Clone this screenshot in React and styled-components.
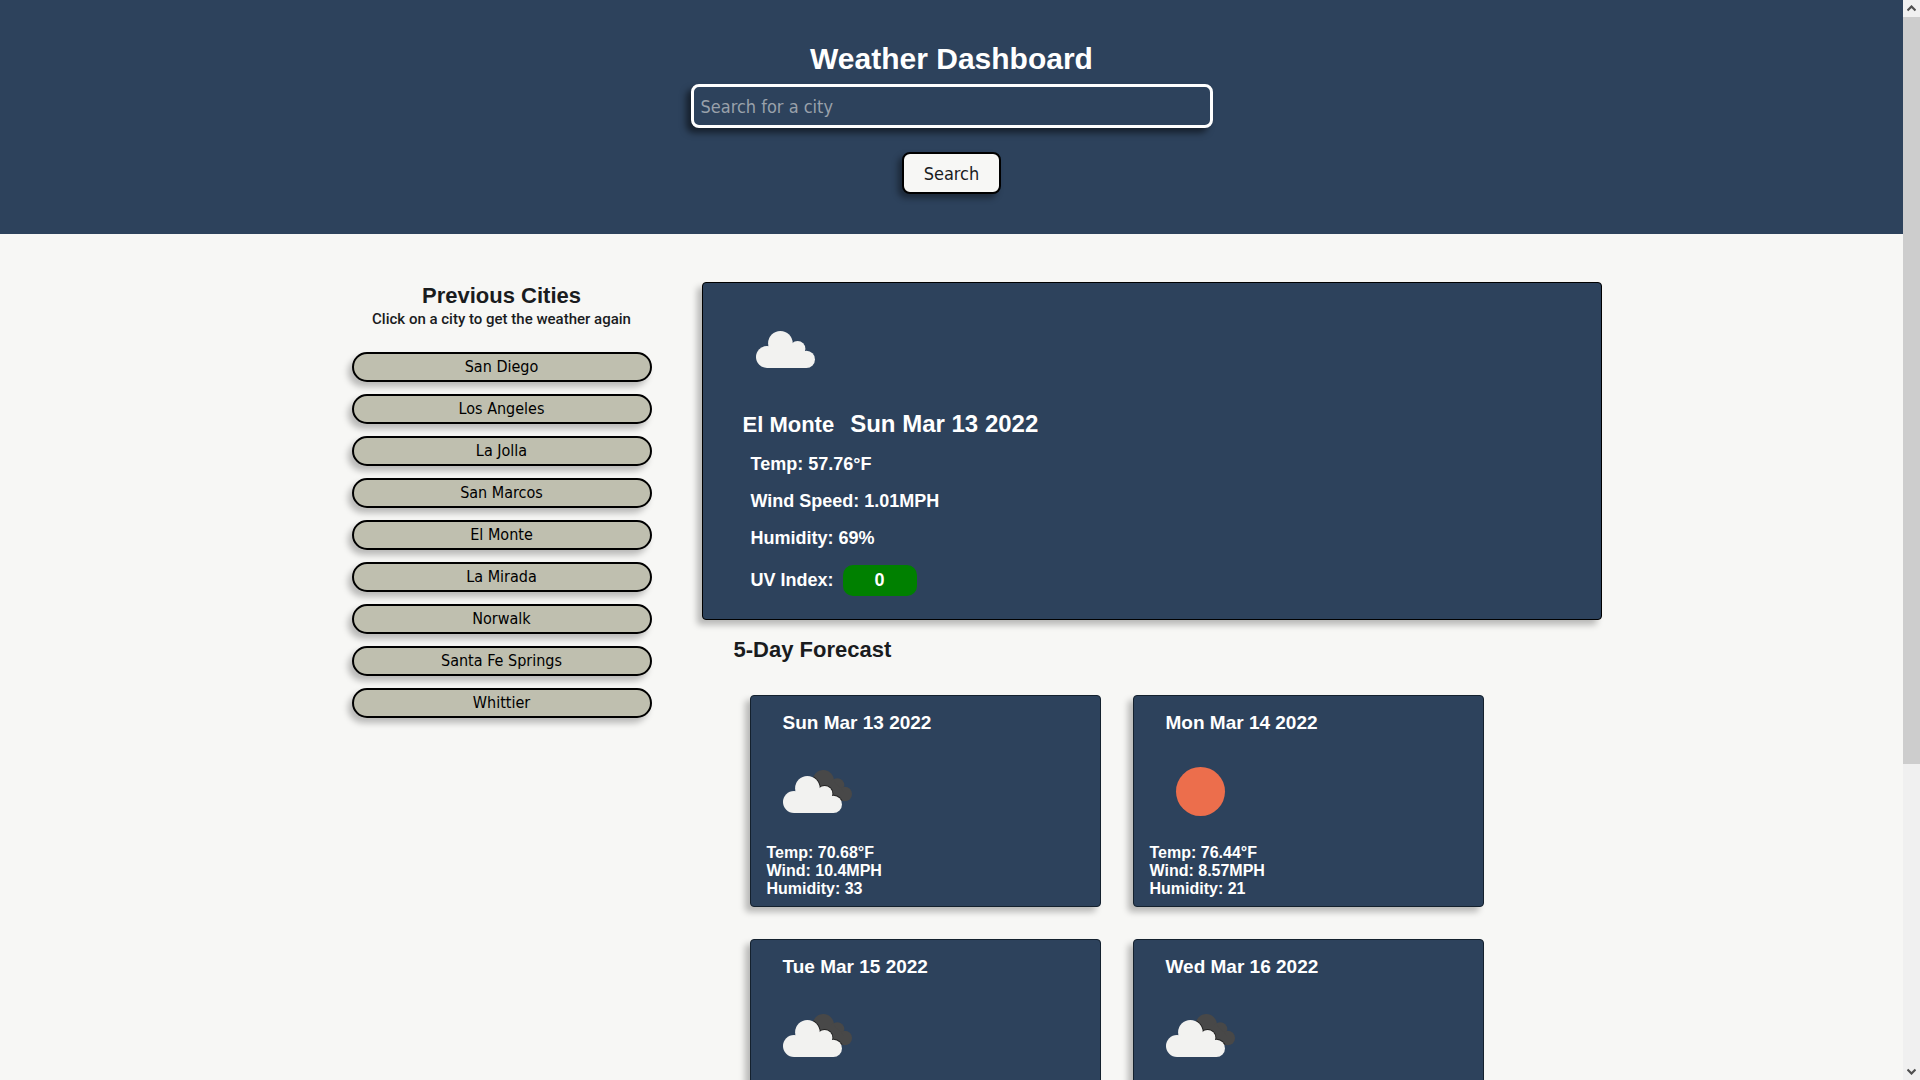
import React, { useId } from "react";
import styled, { createGlobalStyle } from "styled-components";

const navy = "#2d425c";
const paper = "#f7f7f5";
const ink = "#1a1c1e";
const heading = '"Liberation Sans", Arial, sans-serif';
const label = '"DejaVu Sans Condensed", Tahoma, "Noto Sans", sans-serif';

const GlobalStyle = createGlobalStyle`
  *, *::before, *::after { box-sizing: border-box; }
  body { margin: 0; background: ${paper}; color: ${ink}; font-family: ${heading}; }
  h1, h2, h3, p, ul { margin: 0; padding: 0; }
`;

const Window = styled.div`
  display: grid;
  grid-template-columns: minmax(0, 1fr) 17px;
  height: 100vh;
  overflow: hidden;
`;

const Page = styled.div`
  overflow: hidden;
  background: ${paper};
`;

const Header = styled.header`
  display: flex;
  justify-content: center;
  padding: 40px 16px;
  background: ${navy};
`;

const SearchForm = styled.form`
  display: flex;
  flex-direction: column;
  align-items: center;
  width: 100%;
  max-width: 522px;
`;

const Title = styled.h1`
  margin-bottom: 6px;
  color: #fff;
  font-size: 30px;
  line-height: 38px;
`;

const SearchInput = styled.input`
  width: 100%;
  height: 44px;
  margin-bottom: 24px;
  padding: 0 7px;
  border: 3px solid #fff;
  border-radius: 8px;
  background: ${navy};
  box-shadow: -5px 5px 6px rgba(0, 0, 0, 0.5);
  color: #fff;
  font-family: ${label};
  font-size: 18px;
  &::placeholder { color: #99a1ab; opacity: 1; }
`;

const SearchButton = styled.button`
  height: 42px;
  padding: 0 20px;
  border: 2px solid #000;
  border-radius: 8px;
  background: ${paper};
  box-shadow: -4px 4px 6px rgba(0, 0, 0, 0.4);
  color: ${ink};
  font-family: ${label};
  font-size: 18px;
`;

const Main = styled.main`
  display: grid;
  grid-template-columns: 300px minmax(0, 900px);
  justify-content: center;
  gap: 50px;
  padding: 48px 0 48px 50px;
`;

const SectionTitle = styled.h2`
  font-size: 22px;
  line-height: 28px;
`;

const Cities = styled.section`
  text-align: center;
`;

const Hint = styled.p`
  font-family: Roboto, ${heading};
  font-size: 15px;
  font-weight: 500;
  line-height: 18px;
`;

const CityList = styled.ul`
  display: flex;
  flex-direction: column;
  gap: 12px;
  margin-top: 24px;
  list-style: none;
`;

const CityItem = styled.li`
  display: flex;
`;

const CityButton = styled.button`
  flex: 1;
  height: 30px;
  padding: 0;
  border: 2px solid #000;
  border-radius: 16px;
  background: #bfbfaf;
  box-shadow: -4px 5px 6px rgba(0, 0, 0, 0.25);
  color: #000;
  font-family: ${label};
  font-size: 16px;
  line-height: 24px;
`;

const Panel = styled.article`
  border: 1px solid ${(p) => p.$edge};
  border-radius: 4px;
  background: ${navy};
  box-shadow: -5px 5px 6px rgba(0, 0, 0, 0.25);
  color: #fff;
`;

const Current = styled(Panel)`
  padding: 16px 32px 23px;
`;

const CurrentHeading = styled.h2`
  display: flex;
  align-items: baseline;
  gap: 16px;
  margin: 12px 8px 16px;
  font-size: 24px;
  line-height: 26px;
`;

const CityName = styled.span`
  font-size: 22px;
`;

const CurrentStats = styled.div`
  display: flex;
  flex-direction: column;
  gap: 16px;
  padding-left: 16px;
  font-size: 18px;
  font-weight: bold;
  line-height: 21px;
`;

const UvRow = styled.div`
  display: flex;
  align-items: center;
  gap: 9px;
`;

const UvBadge = styled.span`
  padding: 5px 32px;
  border-radius: 10px;
  background: green;
`;

const Forecast = styled.section`
  padding: 16px 32px 0;
`;

const ForecastGrid = styled.div`
  display: grid;
  grid-template-columns: repeat(2, minmax(0, 351px));
  gap: 32px;
  padding: 31px 16px 0;
`;

const DayCard = styled(Panel)`
  min-height: 212px;
  padding: 16px 16px 8px;
`;

const DayTitle = styled.h3`
  margin: 0 16px 6px;
  font-size: 19px;
  line-height: 22px;
`;

const DayStats = styled.div`
  margin-top: 4px;
  font-size: 16px;
  font-weight: bold;
  line-height: 18px;
`;

const Icon = styled.svg`
  display: block;
  width: 100px;
  height: 100px;
`;

const Scrollbar = styled.div`
  display: flex;
  flex-direction: column;
  background: #f0f0f0;
`;

const ScrollArrow = styled.button`
  display: grid;
  place-items: center;
  width: 17px;
  height: 17px;
  padding: 0;
  border: 0;
  background: #f0f0f0;
`;

const ScrollThumb = styled.div`
  flex: 5;
  background: #cdcdcd;
`;

const ScrollTrack = styled.div`
  flex: 2;
`;

function CloudShape(props) {
  return (
    <g {...props}>
      <circle cx="24.4" cy="12.3" r="12.3" />
      <circle cx="11" cy="26" r="11" />
      <circle cx="41.6" cy="17.8" r="7.8" />
      <circle cx="50.4" cy="28.4" r="8.6" />
      <path d="M11 20H49V24L50.4 37H11Z" />
      <path d="M20 14H42V30H20Z" />
    </g>
  );
}

function DarkCloudShape() {
  return (
    <>
      <circle cx="56.3" cy="40.7" r="10.7" />
      <circle cx="70.3" cy="45.2" r="7" />
      <circle cx="77.7" cy="54" r="7.3" />
      <path d="M50 44L66 40L77 52L77 61L60 58Z" />
    </>
  );
}

function BrokenClouds() {
  const clip = useId();
  return (
    <Icon viewBox="0 0 100 100" role="img" aria-label="Broken clouds">
      <clipPath id={clip}>
        <circle cx="56.3" cy="40.7" r="10.7" />
        <circle cx="70.3" cy="45.2" r="7" />
        <circle cx="77.7" cy="54" r="7.3" />
        <path d="M50 44L66 40L77 52L77 61L60 58Z" />
      </clipPath>
      <g fill="#484848">
        <DarkCloudShape />
      </g>
      <g clipPath={`url(#${clip})`}>
        <CloudShape transform="translate(16 36)" fill="#222" stroke="#222" strokeWidth="2" />
      </g>
      <CloudShape transform="translate(16 36)" fill="#f2f2f0" />
    </Icon>
  );
}

function ScatteredClouds() {
  return (
    <Icon viewBox="0 0 100 100" role="img" aria-label="Cloudy">
      <CloudShape transform="translate(21 32)" fill="#f2f2f0" />
    </Icon>
  );
}

function ClearSky() {
  return (
    <Icon viewBox="0 0 100 100" role="img" aria-label="Clear sky">
      <circle cx="50.5" cy="51.5" r="24.5" fill="#ec6e4c" />
    </Icon>
  );
}

const cities = [
  "San Diego", "Los Angeles", "La Jolla", "San Marcos", "El Monte",
  "La Mirada", "Norwalk", "Santa Fe Springs", "Whittier",
];

const days = [
  { date: "Sun Mar 13 2022", Sky: BrokenClouds, stats: ["Temp: 70.68°F", "Wind: 10.4MPH", "Humidity: 33"] },
  { date: "Mon Mar 14 2022", Sky: ClearSky, stats: ["Temp: 76.44°F", "Wind: 8.57MPH", "Humidity: 21"] },
  { date: "Tue Mar 15 2022", Sky: BrokenClouds, stats: [] },
  { date: "Wed Mar 16 2022", Sky: BrokenClouds, stats: [] },
];

function Chevron({ d }) {
  return (
    <svg width="9" height="7" viewBox="0 0 9 7" aria-hidden="true">
      <path d={d} fill="none" stroke="#505050" strokeWidth="2.2" />
    </svg>
  );
}

export default function App() {
  return (
    <Window>
      <GlobalStyle />
      <Page>
        <Header>
          <SearchForm onSubmit={(e) => e.preventDefault()}>
            <Title>Weather Dashboard</Title>
            <SearchInput type="text" aria-label="Search for a city" placeholder="Search for a city" />
            <SearchButton type="submit">Search</SearchButton>
          </SearchForm>
        </Header>
        <Main>
          <Cities>
            <SectionTitle>Previous Cities</SectionTitle>
            <Hint>Click on a city to get the weather again</Hint>
            <CityList>
              {cities.map((city) => (
                <CityItem key={city}>
                  <CityButton type="button">{city}</CityButton>
                </CityItem>
              ))}
            </CityList>
          </Cities>
          <div>
            <Current $edge="#000">
              <ScatteredClouds />
              <CurrentHeading>
                <CityName>El Monte</CityName>
                <span>Sun Mar 13 2022</span>
              </CurrentHeading>
              <CurrentStats>
                <p>Temp: 57.76°F</p>
                <p>Wind Speed: 1.01MPH</p>
                <p>Humidity: 69%</p>
                <UvRow>
                  <span>UV Index:</span>
                  <UvBadge>0</UvBadge>
                </UvRow>
              </CurrentStats>
            </Current>
            <Forecast>
              <SectionTitle>5-Day Forecast</SectionTitle>
              <ForecastGrid>
                {days.map(({ date, Sky, stats }) => (
                  <DayCard key={date} $edge="#14212e">
                    <DayTitle>{date}</DayTitle>
                    <Sky />
                    <DayStats>
                      {stats.map((line) => (
                        <p key={line}>{line}</p>
                      ))}
                    </DayStats>
                  </DayCard>
                ))}
              </ForecastGrid>
            </Forecast>
          </div>
        </Main>
      </Page>
      <Scrollbar>
        <ScrollArrow type="button" aria-label="Scroll up">
          <Chevron d="M0.5 5.5L4.5 1.5L8.5 5.5" />
        </ScrollArrow>
        <ScrollThumb />
        <ScrollTrack />
        <ScrollArrow type="button" aria-label="Scroll down">
          <Chevron d="M0.5 1.5L4.5 5.5L8.5 1.5" />
        </ScrollArrow>
      </Scrollbar>
    </Window>
  );
}
